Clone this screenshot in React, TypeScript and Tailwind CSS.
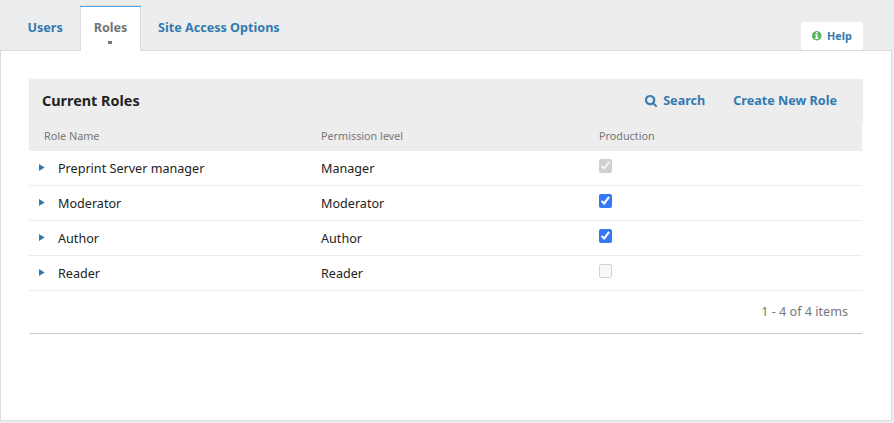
type CheckState = 'on' | 'off' | 'locked';

const roles: { name: string; level: string; state: CheckState }[] = [
  { name: 'Preprint Server manager', level: 'Manager', state: 'locked' },
  { name: 'Moderator', level: 'Moderator', state: 'on' },
  { name: 'Author', level: 'Author', state: 'on' },
  { name: 'Reader', level: 'Reader', state: 'off' },
];

function SearchIcon() {
  return (
    <svg viewBox="0 128 1664 1664" className="h-3 w-3 shrink-0 fill-current stroke-current" strokeWidth="40">
      <path d="M1152 832q0-185-131.5-316.5T704 384 387.5 515.5 256 832t131.5 316.5T704 1280t316.5-131.5T1152 832zm512 832q0 52-38 90t-90 38q-54 0-90-38l-343-342q-179 124-399 124-143 0-273.5-55.5t-225-150-150-225T0 832t55.5-273.5 150-225 225-150T704 128t273.5 55.5 225 150 150 225T1408 832q0 220-124 399l343 343q37 37 37 90z" />
    </svg>
  );
}

function InfoIcon() {
  return (
    <svg viewBox="128 128 1536 1536" className="h-[9.5px] w-[9.5px] shrink-0 fill-[#5cb45c]">
      <path d="M1152 1376v-160q0-14-9-23t-23-9h-96V672q0-14-9-23t-23-9H672q-14 0-23 9t-9 23v160q0 14 9 23t23 9h96v320h-96q-14 0-23 9t-9 23v160q0 14 9 23t23 9h448q14 0 23-9t9-23zm-128-896V320q0-14-9-23t-23-9H800q-14 0-23 9t-9 23v160q0 14 9 23t23 9h192q14 0 23-9t9-23zm640 416q0 209-103 385.5T1281.5 1561 896 1664t-385.5-103T231 1281.5 128 896t103-385.5T510.5 231 896 128t385.5 103T1561 510.5 1664 896z" />
    </svg>
  );
}

function Check({ state }: { state: CheckState }) {
  if (state === 'off') {
    return <span className="block h-[13.5px] w-[13px] rounded-[2px] border border-[#d3d3d3] bg-[#f8f8f8]" />;
  }
  const on = state === 'on';
  return (
    <span className={`flex h-[13.5px] w-[13px] items-center justify-center rounded-[2px] ${on ? 'bg-[#3478f6]' : 'bg-[#d0d0d0]'}`}>
      <svg viewBox="0 0 13 13" className="h-[13px] w-[13px]" fill="none">
        <path d="M2.6 6.9 5.2 9.4 10.1 2.9" stroke={on ? '#fff' : '#f1f1f1'} strokeWidth="2.1" />
      </svg>
    </span>
  );
}

export default function App() {
  return (
    <div className="flex h-[423px] w-[894px] flex-col bg-[#ebedee] font-['Noto_Sans',sans-serif] text-[12.6px] text-[#222]">
      <header className="flex h-[50px] shrink-0 justify-between font-bold text-[#337ab0]">
        <nav className="flex">
          <a className="w-20 pt-[19px] pl-[27.5px] leading-[18px] whitespace-nowrap">Users</a>
          <div className="z-10 mt-[5px] h-[46px] w-[61px] bg-white">
            <div className="h-px bg-[#dcdede]" />
            <div className="h-px bg-[#4ba3ea]" />
            <a className="flex h-[44px] flex-col items-center border-x border-[#dcdede] pt-3 leading-[18px] text-[#757575]">
              Roles
              <span className="mt-1 mr-px h-[3px] w-1 bg-[#777]" />
            </a>
          </div>
          <a className="pt-[19px] pl-[17px] leading-[18px] whitespace-nowrap">Site Access Options</a>
        </nav>
        <a className="mt-[22px] mr-[31px] flex h-7 w-[62px] items-center gap-[5.5px] rounded-t-[2px] bg-white pl-[11px] text-[10.8px]">
          <InfoIcon />
          Help
        </a>
      </header>
      <main className="h-[371px] w-[892px] shrink-0 border border-[#dadbdc] bg-white px-7 pt-7">
        <section className="flex h-[255px] w-[834px] flex-col rounded-[2px] border-b border-[#ccc] shadow-[0_0_1px_rgba(0,0,0,0.12)]">
          <div className="flex h-[43px] items-center rounded-t-[2px] bg-[#ededed] pr-[26px] pl-[13px] font-bold">
            <h1 className="grow text-[14.4px]">Current Roles</h1>
            <a className="flex items-center gap-[6.5px] pt-px leading-5 text-[#337ab0]">
              <SearchIcon />
              Search
            </a>
            <a className="ml-7 pt-px leading-5 text-[#337ab0]">Create New Role</a>
          </div>
          <div className="grid h-[29px] w-[833px] grid-cols-[277px_278px_1fr] items-center bg-[#ededed] text-[10.8px] text-[#777]">
            <span className="pl-[15px]">Role Name</span>
            <span className="pl-[15px]">Permission level</span>
            <span className="pl-[15px]">Production</span>
          </div>
          {roles.map((role) => (
            <div key={role.name} className="grid h-[35px] w-[833px] grid-cols-[277px_278px_1fr] border-b border-[#ebebeb] leading-[35px]">
              <span className="flex pl-[10px]">
                <svg viewBox="0 0 6 7" className="mt-[13px] h-[7px] w-[6px] fill-[#337ab0]">
                  <path d="M0 0 5.7 3.5 0 7z" />
                </svg>
                <span className="pl-[13px]">{role.name}</span>
              </span>
              <span className="pl-[15px]">{role.level}</span>
              <span className="pt-2 pl-[15px]">
                <Check state={role.state} />
              </span>
            </div>
          ))}
          <div className="grow pr-[15px] text-right leading-[41px] text-[#777]">1 - 4 of 4 items</div>
        </section>
      </main>
    </div>
  );
}
